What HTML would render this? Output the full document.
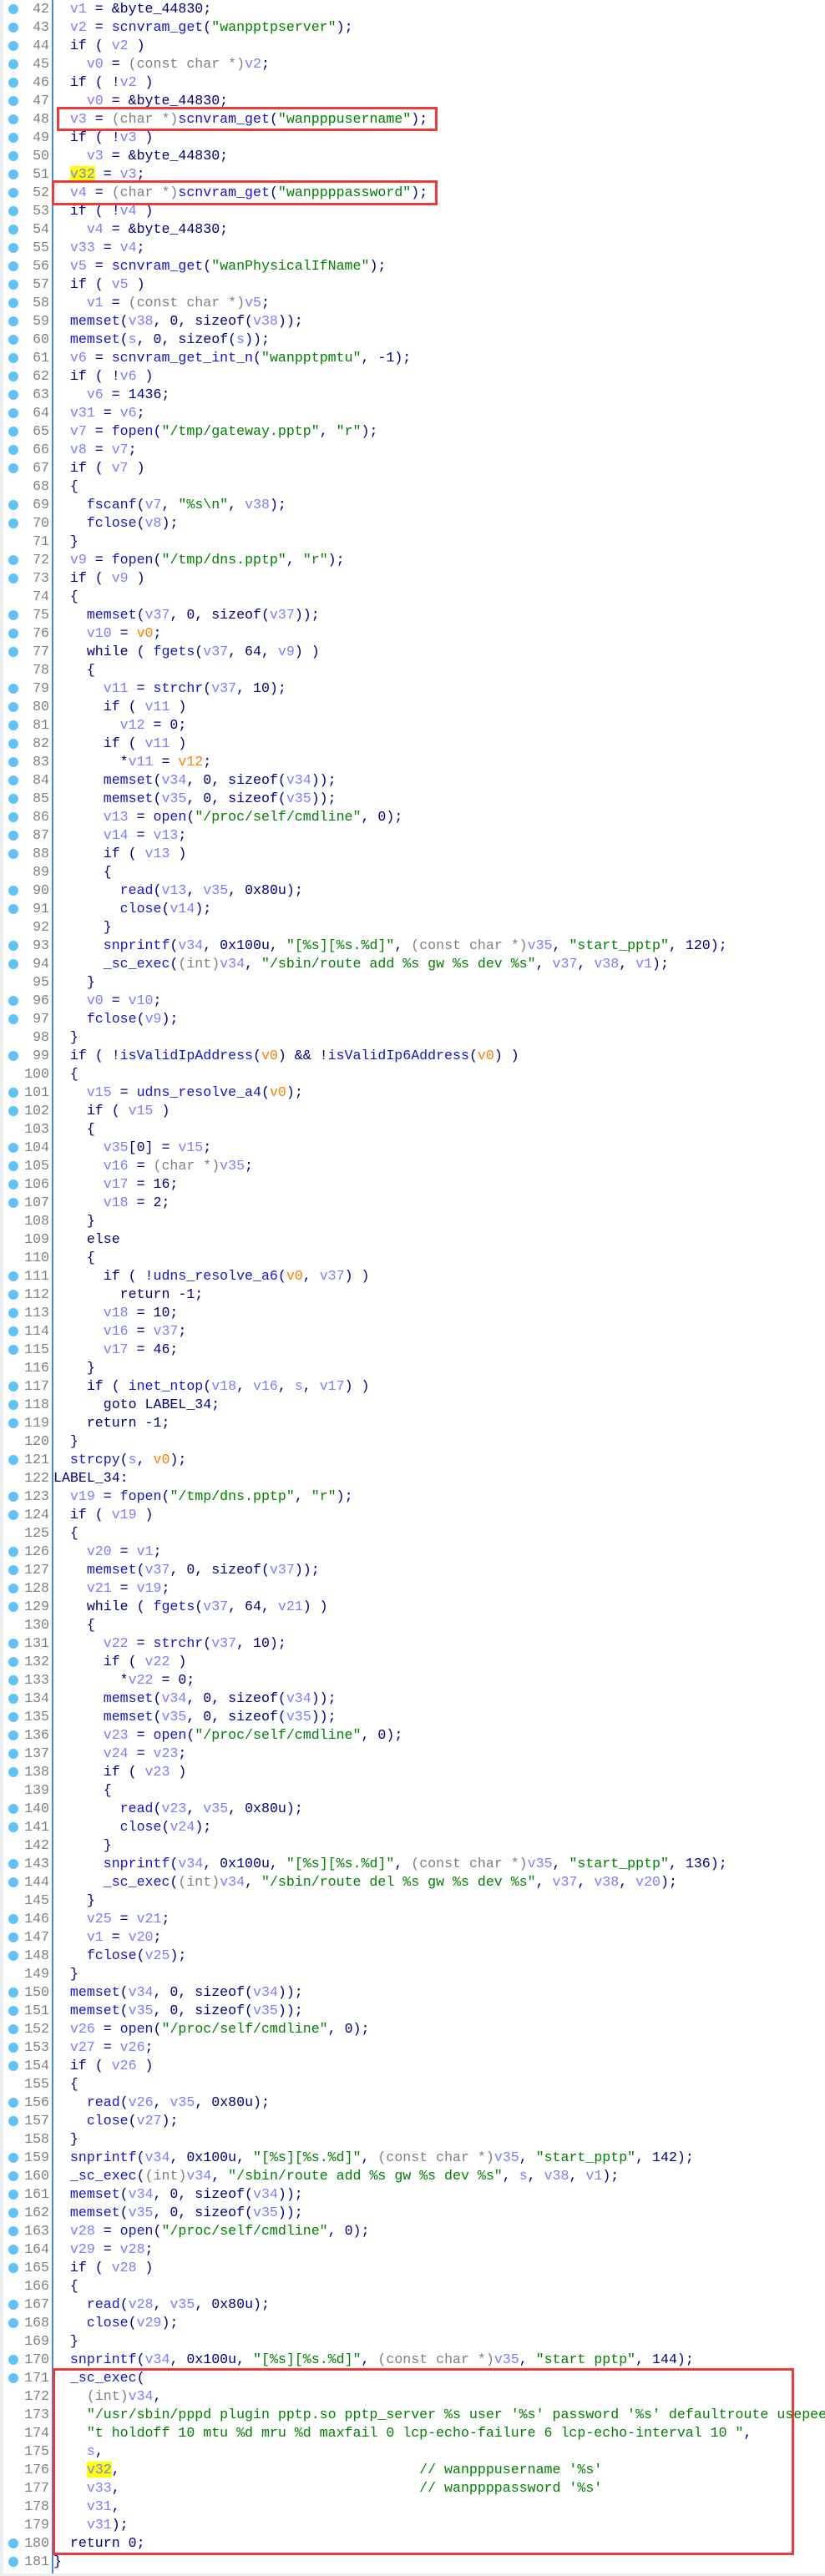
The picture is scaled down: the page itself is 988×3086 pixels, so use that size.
<!DOCTYPE html>
<html><head><meta charset="utf-8"><style>
html,body{margin:0;padding:0;background:#fff;width:988px;height:3086px;overflow:hidden;}
body{position:relative;counter-reset:ln 41;}
#strip{position:absolute;left:0;top:0;width:4px;height:3086px;background:#eeeeee;}
#gl{position:absolute;left:62px;top:0;width:2px;height:3083px;background:#3b8de0;}
#bot{position:absolute;left:0;top:3083px;width:988px;height:3px;background:#eeeeee;}
.l{position:absolute;left:0;height:22px;width:988px;overflow:hidden;font-family:"Liberation Mono",monospace;font-size:16.6px;line-height:22px;white-space:pre;color:#000080;counter-increment:ln;}
.l::after{content:counter(ln);position:absolute;left:0;width:59px;text-align:right;top:0;color:#808080;}
.l.d::before{content:"";position:absolute;left:10px;top:5px;width:12px;height:12px;border-radius:50%;background:#5ec4f8;}
.c{position:absolute;left:64px;top:0;}
i{font-style:normal;color:#7d7dff;}
b{font-weight:normal;color:#008000;}
u{text-decoration:none;color:#808080;}
em{font-style:normal;color:#ff8000;}
s{text-decoration:none;color:#1515c8;}
mark{background:#ffff00;color:#7d7dff;}
.box{position:absolute;border:3px solid #f03a3a;box-sizing:border-box;}
</style></head><body>
<div id="strip"></div><div id="gl"></div><div id="bot"></div>
<div class="l d" style="top:0px"><span class="c">  <i>v1</i> = &amp;byte_44830;</span></div>
<div class="l d" style="top:22px"><span class="c">  <i>v2</i> = <s>scnvram_get</s>(<b>"wanpptpserver"</b>);</span></div>
<div class="l d" style="top:44px"><span class="c">  if ( <i>v2</i> )</span></div>
<div class="l d" style="top:66px"><span class="c">    <i>v0</i> = <u>(const char *)</u><i>v2</i>;</span></div>
<div class="l d" style="top:88px"><span class="c">  if ( !<i>v2</i> )</span></div>
<div class="l d" style="top:110px"><span class="c">    <i>v0</i> = &amp;byte_44830;</span></div>
<div class="l d" style="top:132px"><span class="c">  <i>v3</i> = <u>(char *)</u><s>scnvram_get</s>(<b>"wanpppusername"</b>);</span></div>
<div class="l d" style="top:154px"><span class="c">  if ( !<i>v3</i> )</span></div>
<div class="l d" style="top:176px"><span class="c">    <i>v3</i> = &amp;byte_44830;</span></div>
<div class="l d" style="top:198px"><span class="c">  <mark>v32</mark> = <i>v3</i>;</span></div>
<div class="l d" style="top:220px"><span class="c">  <i>v4</i> = <u>(char *)</u><s>scnvram_get</s>(<b>"wanppppassword"</b>);</span></div>
<div class="l d" style="top:242px"><span class="c">  if ( !<i>v4</i> )</span></div>
<div class="l d" style="top:264px"><span class="c">    <i>v4</i> = &amp;byte_44830;</span></div>
<div class="l d" style="top:286px"><span class="c">  <i>v33</i> = <i>v4</i>;</span></div>
<div class="l d" style="top:308px"><span class="c">  <i>v5</i> = <s>scnvram_get</s>(<b>"wanPhysicalIfName"</b>);</span></div>
<div class="l d" style="top:330px"><span class="c">  if ( <i>v5</i> )</span></div>
<div class="l d" style="top:352px"><span class="c">    <i>v1</i> = <u>(const char *)</u><i>v5</i>;</span></div>
<div class="l d" style="top:374px"><span class="c">  <s>memset</s>(<i>v38</i>, 0, sizeof(<i>v38</i>));</span></div>
<div class="l d" style="top:396px"><span class="c">  <s>memset</s>(<i>s</i>, 0, sizeof(<i>s</i>));</span></div>
<div class="l d" style="top:418px"><span class="c">  <i>v6</i> = <s>scnvram_get_int_n</s>(<b>"wanpptpmtu"</b>, -1);</span></div>
<div class="l d" style="top:440px"><span class="c">  if ( !<i>v6</i> )</span></div>
<div class="l d" style="top:462px"><span class="c">    <i>v6</i> = 1436;</span></div>
<div class="l d" style="top:484px"><span class="c">  <i>v31</i> = <i>v6</i>;</span></div>
<div class="l d" style="top:506px"><span class="c">  <i>v7</i> = <s>fopen</s>(<b>"/tmp/gateway.pptp"</b>, <b>"r"</b>);</span></div>
<div class="l d" style="top:528px"><span class="c">  <i>v8</i> = <i>v7</i>;</span></div>
<div class="l d" style="top:550px"><span class="c">  if ( <i>v7</i> )</span></div>
<div class="l" style="top:572px"><span class="c">  {</span></div>
<div class="l d" style="top:594px"><span class="c">    <s>fscanf</s>(<i>v7</i>, <b>"%s\n"</b>, <i>v38</i>);</span></div>
<div class="l d" style="top:616px"><span class="c">    <s>fclose</s>(<i>v8</i>);</span></div>
<div class="l" style="top:638px"><span class="c">  }</span></div>
<div class="l d" style="top:660px"><span class="c">  <i>v9</i> = <s>fopen</s>(<b>"/tmp/dns.pptp"</b>, <b>"r"</b>);</span></div>
<div class="l d" style="top:682px"><span class="c">  if ( <i>v9</i> )</span></div>
<div class="l" style="top:704px"><span class="c">  {</span></div>
<div class="l d" style="top:726px"><span class="c">    <s>memset</s>(<i>v37</i>, 0, sizeof(<i>v37</i>));</span></div>
<div class="l d" style="top:748px"><span class="c">    <i>v10</i> = <em>v0</em>;</span></div>
<div class="l d" style="top:770px"><span class="c">    while ( <s>fgets</s>(<i>v37</i>, 64, <i>v9</i>) )</span></div>
<div class="l" style="top:792px"><span class="c">    {</span></div>
<div class="l d" style="top:814px"><span class="c">      <i>v11</i> = <s>strchr</s>(<i>v37</i>, 10);</span></div>
<div class="l d" style="top:836px"><span class="c">      if ( <i>v11</i> )</span></div>
<div class="l d" style="top:858px"><span class="c">        <i>v12</i> = 0;</span></div>
<div class="l d" style="top:880px"><span class="c">      if ( <i>v11</i> )</span></div>
<div class="l d" style="top:902px"><span class="c">        *<i>v11</i> = <em>v12</em>;</span></div>
<div class="l d" style="top:924px"><span class="c">      <s>memset</s>(<i>v34</i>, 0, sizeof(<i>v34</i>));</span></div>
<div class="l d" style="top:946px"><span class="c">      <s>memset</s>(<i>v35</i>, 0, sizeof(<i>v35</i>));</span></div>
<div class="l d" style="top:968px"><span class="c">      <i>v13</i> = <s>open</s>(<b>"/proc/self/cmdline"</b>, 0);</span></div>
<div class="l d" style="top:990px"><span class="c">      <i>v14</i> = <i>v13</i>;</span></div>
<div class="l d" style="top:1012px"><span class="c">      if ( <i>v13</i> )</span></div>
<div class="l" style="top:1034px"><span class="c">      {</span></div>
<div class="l d" style="top:1056px"><span class="c">        <s>read</s>(<i>v13</i>, <i>v35</i>, 0x80u);</span></div>
<div class="l d" style="top:1078px"><span class="c">        <s>close</s>(<i>v14</i>);</span></div>
<div class="l" style="top:1100px"><span class="c">      }</span></div>
<div class="l d" style="top:1122px"><span class="c">      <s>snprintf</s>(<i>v34</i>, 0x100u, <b>"[%s][%s.%d]"</b>, <u>(const char *)</u><i>v35</i>, <b>"start_pptp"</b>, 120);</span></div>
<div class="l d" style="top:1144px"><span class="c">      <s>_sc_exec</s>(<u>(int)</u><i>v34</i>, <b>"/sbin/route add %s gw %s dev %s"</b>, <i>v37</i>, <i>v38</i>, <i>v1</i>);</span></div>
<div class="l" style="top:1166px"><span class="c">    }</span></div>
<div class="l d" style="top:1188px"><span class="c">    <i>v0</i> = <i>v10</i>;</span></div>
<div class="l d" style="top:1210px"><span class="c">    <s>fclose</s>(<i>v9</i>);</span></div>
<div class="l" style="top:1232px"><span class="c">  }</span></div>
<div class="l d" style="top:1254px"><span class="c">  if ( !<s>isValidIpAddress</s>(<em>v0</em>) &amp;&amp; !<s>isValidIp6Address</s>(<em>v0</em>) )</span></div>
<div class="l" style="top:1276px"><span class="c">  {</span></div>
<div class="l d" style="top:1298px"><span class="c">    <i>v15</i> = <s>udns_resolve_a4</s>(<em>v0</em>);</span></div>
<div class="l d" style="top:1320px"><span class="c">    if ( <i>v15</i> )</span></div>
<div class="l" style="top:1342px"><span class="c">    {</span></div>
<div class="l d" style="top:1364px"><span class="c">      <i>v35</i>[0] = <i>v15</i>;</span></div>
<div class="l d" style="top:1386px"><span class="c">      <i>v16</i> = <u>(char *)</u><i>v35</i>;</span></div>
<div class="l d" style="top:1408px"><span class="c">      <i>v17</i> = 16;</span></div>
<div class="l d" style="top:1430px"><span class="c">      <i>v18</i> = 2;</span></div>
<div class="l" style="top:1452px"><span class="c">    }</span></div>
<div class="l" style="top:1474px"><span class="c">    else</span></div>
<div class="l" style="top:1496px"><span class="c">    {</span></div>
<div class="l d" style="top:1518px"><span class="c">      if ( !<s>udns_resolve_a6</s>(<em>v0</em>, <i>v37</i>) )</span></div>
<div class="l d" style="top:1540px"><span class="c">        return -1;</span></div>
<div class="l d" style="top:1562px"><span class="c">      <i>v18</i> = 10;</span></div>
<div class="l d" style="top:1584px"><span class="c">      <i>v16</i> = <i>v37</i>;</span></div>
<div class="l d" style="top:1606px"><span class="c">      <i>v17</i> = 46;</span></div>
<div class="l" style="top:1628px"><span class="c">    }</span></div>
<div class="l d" style="top:1650px"><span class="c">    if ( <s>inet_ntop</s>(<i>v18</i>, <i>v16</i>, <i>s</i>, <i>v17</i>) )</span></div>
<div class="l d" style="top:1672px"><span class="c">      goto LABEL_34;</span></div>
<div class="l d" style="top:1694px"><span class="c">    return -1;</span></div>
<div class="l" style="top:1716px"><span class="c">  }</span></div>
<div class="l d" style="top:1738px"><span class="c">  <s>strcpy</s>(<i>s</i>, <em>v0</em>);</span></div>
<div class="l" style="top:1760px"><span class="c">LABEL_34:</span></div>
<div class="l d" style="top:1782px"><span class="c">  <i>v19</i> = <s>fopen</s>(<b>"/tmp/dns.pptp"</b>, <b>"r"</b>);</span></div>
<div class="l d" style="top:1804px"><span class="c">  if ( <i>v19</i> )</span></div>
<div class="l" style="top:1826px"><span class="c">  {</span></div>
<div class="l d" style="top:1848px"><span class="c">    <i>v20</i> = <i>v1</i>;</span></div>
<div class="l d" style="top:1870px"><span class="c">    <s>memset</s>(<i>v37</i>, 0, sizeof(<i>v37</i>));</span></div>
<div class="l d" style="top:1892px"><span class="c">    <i>v21</i> = <i>v19</i>;</span></div>
<div class="l d" style="top:1914px"><span class="c">    while ( <s>fgets</s>(<i>v37</i>, 64, <i>v21</i>) )</span></div>
<div class="l" style="top:1936px"><span class="c">    {</span></div>
<div class="l d" style="top:1958px"><span class="c">      <i>v22</i> = <s>strchr</s>(<i>v37</i>, 10);</span></div>
<div class="l d" style="top:1980px"><span class="c">      if ( <i>v22</i> )</span></div>
<div class="l d" style="top:2002px"><span class="c">        *<i>v22</i> = 0;</span></div>
<div class="l d" style="top:2024px"><span class="c">      <s>memset</s>(<i>v34</i>, 0, sizeof(<i>v34</i>));</span></div>
<div class="l d" style="top:2046px"><span class="c">      <s>memset</s>(<i>v35</i>, 0, sizeof(<i>v35</i>));</span></div>
<div class="l d" style="top:2068px"><span class="c">      <i>v23</i> = <s>open</s>(<b>"/proc/self/cmdline"</b>, 0);</span></div>
<div class="l d" style="top:2090px"><span class="c">      <i>v24</i> = <i>v23</i>;</span></div>
<div class="l d" style="top:2112px"><span class="c">      if ( <i>v23</i> )</span></div>
<div class="l" style="top:2134px"><span class="c">      {</span></div>
<div class="l d" style="top:2156px"><span class="c">        <s>read</s>(<i>v23</i>, <i>v35</i>, 0x80u);</span></div>
<div class="l d" style="top:2178px"><span class="c">        <s>close</s>(<i>v24</i>);</span></div>
<div class="l" style="top:2200px"><span class="c">      }</span></div>
<div class="l d" style="top:2222px"><span class="c">      <s>snprintf</s>(<i>v34</i>, 0x100u, <b>"[%s][%s.%d]"</b>, <u>(const char *)</u><i>v35</i>, <b>"start_pptp"</b>, 136);</span></div>
<div class="l d" style="top:2244px"><span class="c">      <s>_sc_exec</s>(<u>(int)</u><i>v34</i>, <b>"/sbin/route del %s gw %s dev %s"</b>, <i>v37</i>, <i>v38</i>, <i>v20</i>);</span></div>
<div class="l" style="top:2266px"><span class="c">    }</span></div>
<div class="l d" style="top:2288px"><span class="c">    <i>v25</i> = <i>v21</i>;</span></div>
<div class="l d" style="top:2310px"><span class="c">    <i>v1</i> = <i>v20</i>;</span></div>
<div class="l d" style="top:2332px"><span class="c">    <s>fclose</s>(<i>v25</i>);</span></div>
<div class="l" style="top:2354px"><span class="c">  }</span></div>
<div class="l d" style="top:2376px"><span class="c">  <s>memset</s>(<i>v34</i>, 0, sizeof(<i>v34</i>));</span></div>
<div class="l d" style="top:2398px"><span class="c">  <s>memset</s>(<i>v35</i>, 0, sizeof(<i>v35</i>));</span></div>
<div class="l d" style="top:2420px"><span class="c">  <i>v26</i> = <s>open</s>(<b>"/proc/self/cmdline"</b>, 0);</span></div>
<div class="l d" style="top:2442px"><span class="c">  <i>v27</i> = <i>v26</i>;</span></div>
<div class="l d" style="top:2464px"><span class="c">  if ( <i>v26</i> )</span></div>
<div class="l" style="top:2486px"><span class="c">  {</span></div>
<div class="l d" style="top:2508px"><span class="c">    <s>read</s>(<i>v26</i>, <i>v35</i>, 0x80u);</span></div>
<div class="l d" style="top:2530px"><span class="c">    <s>close</s>(<i>v27</i>);</span></div>
<div class="l" style="top:2552px"><span class="c">  }</span></div>
<div class="l d" style="top:2574px"><span class="c">  <s>snprintf</s>(<i>v34</i>, 0x100u, <b>"[%s][%s.%d]"</b>, <u>(const char *)</u><i>v35</i>, <b>"start_pptp"</b>, 142);</span></div>
<div class="l d" style="top:2596px"><span class="c">  <s>_sc_exec</s>(<u>(int)</u><i>v34</i>, <b>"/sbin/route add %s gw %s dev %s"</b>, <i>s</i>, <i>v38</i>, <i>v1</i>);</span></div>
<div class="l d" style="top:2618px"><span class="c">  <s>memset</s>(<i>v34</i>, 0, sizeof(<i>v34</i>));</span></div>
<div class="l d" style="top:2640px"><span class="c">  <s>memset</s>(<i>v35</i>, 0, sizeof(<i>v35</i>));</span></div>
<div class="l d" style="top:2662px"><span class="c">  <i>v28</i> = <s>open</s>(<b>"/proc/self/cmdline"</b>, 0);</span></div>
<div class="l d" style="top:2684px"><span class="c">  <i>v29</i> = <i>v28</i>;</span></div>
<div class="l d" style="top:2706px"><span class="c">  if ( <i>v28</i> )</span></div>
<div class="l" style="top:2728px"><span class="c">  {</span></div>
<div class="l d" style="top:2750px"><span class="c">    <s>read</s>(<i>v28</i>, <i>v35</i>, 0x80u);</span></div>
<div class="l d" style="top:2772px"><span class="c">    <s>close</s>(<i>v29</i>);</span></div>
<div class="l" style="top:2794px"><span class="c">  }</span></div>
<div class="l d" style="top:2816px"><span class="c">  <s>snprintf</s>(<i>v34</i>, 0x100u, <b>"[%s][%s.%d]"</b>, <u>(const char *)</u><i>v35</i>, <b>"start pptp"</b>, 144);</span></div>
<div class="l d" style="top:2838px"><span class="c">  <s>_sc_exec</s>(</span></div>
<div class="l" style="top:2860px"><span class="c">    <u>(int)</u><i>v34</i>,</span></div>
<div class="l" style="top:2882px"><span class="c">    <b>"/usr/sbin/pppd plugin pptp.so pptp_server %s user '%s' password '%s' defaultroute usepee</b></span></div>
<div class="l" style="top:2904px"><span class="c">    <b>"t holdoff 10 mtu %d mru %d maxfail 0 lcp-echo-failure 6 lcp-echo-interval 10 "</b>,</span></div>
<div class="l" style="top:2926px"><span class="c">    <i>s</i>,</span></div>
<div class="l" style="top:2948px"><span class="c">    <mark>v32</mark>,                                    <b>// wanpppusername '%s'</b></span></div>
<div class="l" style="top:2970px"><span class="c">    <i>v33</i>,                                    <b>// wanppppassword '%s'</b></span></div>
<div class="l" style="top:2992px"><span class="c">    <i>v31</i>,</span></div>
<div class="l" style="top:3014px"><span class="c">    <i>v31</i>);</span></div>
<div class="l d" style="top:3036px"><span class="c">  return 0;</span></div>
<div class="l d" style="top:3058px"><span class="c">}</span></div>
<div class="box" style="left:68px;top:128px;width:456px;height:29px"></div>
<div class="box" style="left:62px;top:216px;width:462px;height:30px"></div>
<div class="box" style="left:63px;top:2837px;width:888px;height:224px"></div>
</body></html>
